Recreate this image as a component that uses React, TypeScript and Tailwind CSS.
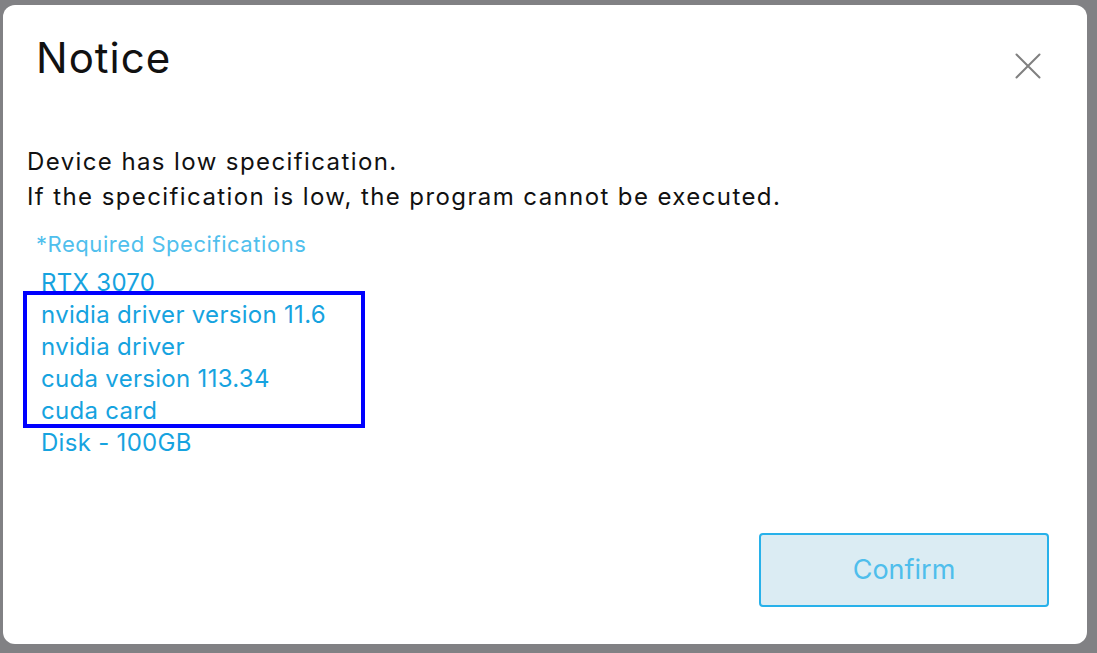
import React from 'react';

const specs = ['nvidia driver version 11.6', 'nvidia driver', 'cuda version 113.34', 'cuda card'];

export default function App() {
    return (
        <div className="w-full h-screen bg-[#818184] pt-[5px] pl-[3px]" style={{ fontFamily: 'Inter, "Noto Sans", sans-serif' }}>
            <div className="w-[1084px] h-[639px] bg-white rounded-[12px] flex flex-col">
                {/* Header */}
                <div className="flex justify-between pt-[29px] pl-[33px] pr-[46px]">
                    <h1 className="text-[42px] leading-[48px] tracking-[1px] text-[#111] font-normal">Notice</h1>
                    <button className="mt-[19px] w-[26px] h-[26px] text-[#808080]">
                        <svg width="26" height="26" viewBox="0 0 26 26" fill="none" stroke="currentColor" strokeWidth="2" strokeLinecap="round">
                            <path d="M1.5 1.5L24.5 24.5M24.5 1.5L1.5 24.5" />
                        </svg>
                    </button>
                </div>

                {/* Body */}
                <div className="mt-[62px] pl-[24px] text-[24px] leading-[35px] tracking-[1.4px] text-[#111]">
                    <p>Device has low specification.</p>
                    <p>If the specification is low, the program cannot be executed.</p>
                </div>

                <div className="mt-[15px] pl-[21px]">
                    <p className="pl-[12px] text-[22px] leading-[30px] tracking-[0.55px] text-[#50bfed]">*Required Specifications</p>
                    <div className="mt-[8px] pl-[17px] text-[24px] leading-[32px] tracking-[0.3px] text-[#16a3df]">
                        <p>RTX 3070</p>
                        <div className="relative">
                            <div className="absolute left-[-18px] top-[-8px] w-[342px] h-[137px] border-[4px] border-[#0000ff]" />
                            {specs.map(s => (
                                <p key={s}>{s}</p>
                            ))}
                        </div>
                        <p>Disk - 100GB</p>
                    </div>
                </div>

                {/* Footer */}
                <div className="mt-auto flex justify-end pr-[38px] pb-[37px]">
                    <button className="w-[290px] h-[74px] rounded-[4px] border-2 border-[#27b1ea] bg-[#dbecf3] text-[27px] text-[#4fbeec]">
                        Confirm
                    </button>
                </div>
            </div>
        </div>
    );
}
